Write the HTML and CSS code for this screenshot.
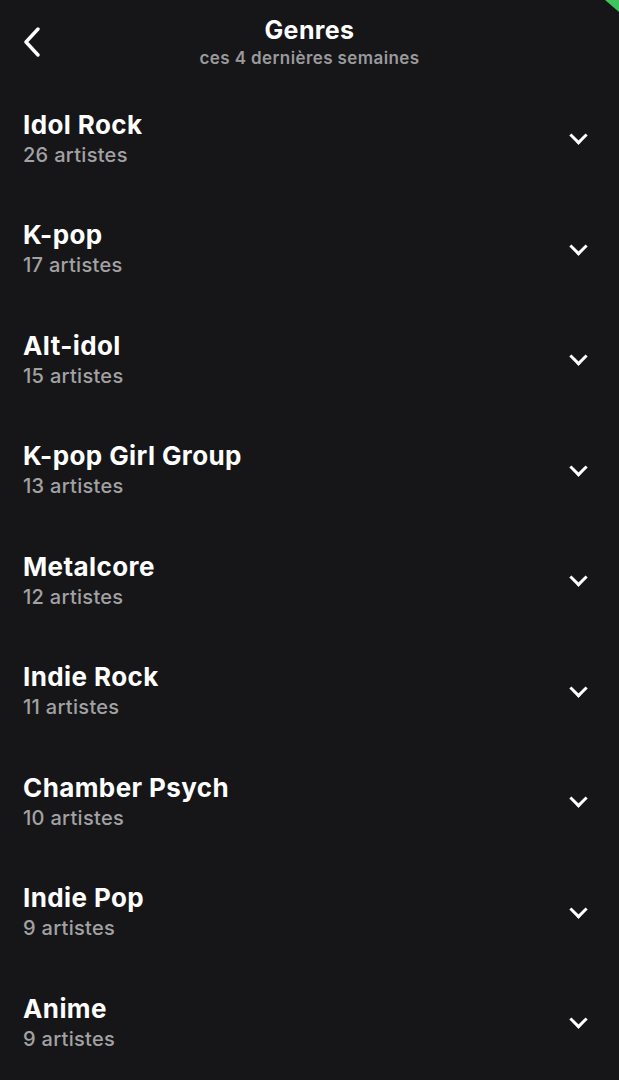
FILE: index.html
```html
<!DOCTYPE html>
<html lang="fr">
<head>
    <meta charset="UTF-8">
    <meta name="viewport" content="width=device-width, initial-scale=1.0">
    <title>Genres</title>
    <link rel="stylesheet" href="styles.css">
</head>
<body>
    <div class="corner"></div>

    <header class="top">
        <button class="back" aria-label="Retour">
            <svg width="22" height="30" viewBox="0 0 22 30"><path d="M17 2 L5 15 L17 28" fill="none" stroke="#fff" stroke-width="3.4" stroke-linecap="round" stroke-linejoin="round"/></svg>
        </button>
        <div class="titles">
            <h1>Genres</h1>
            <p>ces 4 dernières semaines</p>
        </div>
    </header>

    <ul class="genres">
        <li><div><h2>Idol Rock</h2><span>26 artistes</span></div><i class="chev"></i></li>
        <li><div><h2>K-pop</h2><span>17 artistes</span></div><i class="chev"></i></li>
        <li><div><h2>Alt-idol</h2><span>15 artistes</span></div><i class="chev"></i></li>
        <li><div><h2>K-pop Girl Group</h2><span>13 artistes</span></div><i class="chev"></i></li>
        <li><div><h2>Metalcore</h2><span>12 artistes</span></div><i class="chev"></i></li>
        <li><div><h2>Indie Rock</h2><span>11 artistes</span></div><i class="chev"></i></li>
        <li><div><h2>Chamber Psych</h2><span>10 artistes</span></div><i class="chev"></i></li>
        <li><div><h2>Indie Pop</h2><span>9 artistes</span></div><i class="chev"></i></li>
        <li><div><h2>Anime</h2><span>9 artistes</span></div><i class="chev"></i></li>
    </ul>
</body>
</html>
```

FILE: styles.css
```css
body {
    margin: 0;
    background-color: #161618;
    color: #fff;
    font-family: Inter, "Noto Sans", sans-serif;
    height: 1080px;
    overflow: hidden;
    position: relative;
}
.corner {
    position: absolute;
    top: 0;
    right: 0;
    width: 0;
    height: 0;
    border-top: 12px solid #3fc45e;
    border-left: 14px solid transparent;
}
.top {
    position: relative;
    height: 86px;
    display: flex;
    justify-content: center;
}
.back {
    position: absolute;
    left: 21px;
    top: 27px;
    background: none;
    border: none;
    padding: 0;
}
.titles {
    text-align: center;
    padding-top: 15px;
}
.titles h1 {
    margin: 0;
    font-size: 25px;
    font-weight: 700;
    letter-spacing: 0.4px;
    line-height: 30px;
}
.titles p {
    margin: 2px 0 0;
    font-size: 17px;
    font-weight: 600;
    letter-spacing: 0.4px;
    color: #9a9a9c;
    line-height: 22px;
}
.genres {
    list-style: none;
    margin: 0;
    padding: 0;
}
.genres li {
    height: 110.5px;
    display: flex;
    align-items: center;
    justify-content: space-between;
    padding: 0 34px 0 23px;
    box-sizing: border-box;
}
.genres li > div {
    margin-top: -3px;
}
.genres h2 {
    margin: -2px 0 0;
    font-size: 26px;
    font-weight: 700;
    letter-spacing: 0.4px;
    line-height: 30px;
}
.genres span {
    display: block;
    margin-top: 2px;
    font-size: 20px;
    font-weight: 500;
    letter-spacing: 0.3px;
    color: #a2a2a4;
    line-height: 26px;
}
.chev {
    width: 10px;
    height: 10px;
    border-right: 3px solid #fff;
    border-bottom: 3px solid #fff;
    transform: rotate(45deg);
    margin-top: -11px;
}
```
